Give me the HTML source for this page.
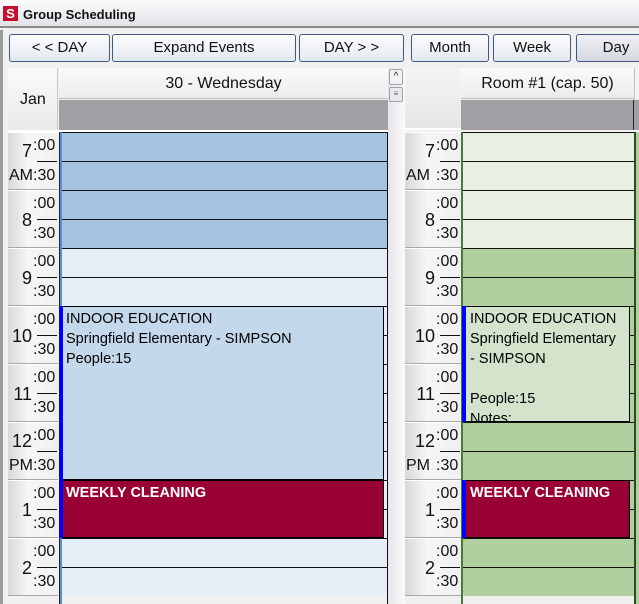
<!DOCTYPE html>
<html style="width:639px;height:604px;overflow:hidden"><head><meta charset="utf-8"><style>
*{margin:0;padding:0;box-sizing:border-box}
body{width:639px;height:604px;overflow:hidden;background:#f0f0f0;font-family:"Liberation Sans",sans-serif;position:relative}
#w{position:absolute;left:0;top:0;width:639px;height:604px;overflow:hidden}
.a{position:absolute}
.btn{position:absolute;top:34px;height:28px;border:1px solid #3c5a80;border-radius:3px;background:linear-gradient(#fdfdfe,#e4e8ef);font-size:15px;color:#111;text-align:center;line-height:26px}
.hr{position:absolute;background:linear-gradient(90deg,#d8d8d8,#f6f6f6 40%,#f0f0f0);border-top:1px solid #fff;border-bottom:1px solid #a8a8a8}
.t{position:absolute;font-size:16px;color:#111}
.n{position:absolute;font-size:18px;color:#111}
.ev{position:absolute;font-size:14.5px;line-height:20px;padding-left:4px;padding-top:2px;overflow:hidden;border:1px solid #000}
</style></head><body><div id="w">
<div class="a" style="left:0;top:0;width:639px;height:28px;background:linear-gradient(#fbfbfc,#e2e3e8);border-bottom:2px solid #8a8a8a"></div>
<div class="a" style="left:3px;top:6px;width:15px;height:15px;background:#c8102e;color:#fff;font:bold 13px 'Liberation Sans',sans-serif;text-align:center;line-height:15px">S</div>
<div class="a" style="left:23px;top:7px;font:bold 13px 'Liberation Sans',sans-serif;color:#111">Group Scheduling</div>
<div class="a" style="left:0;top:30px;width:3px;height:574px;background:#9a9a9a"></div>
<div class="btn" style="left:9px;width:101px">&lt; &lt; DAY</div>
<div class="btn" style="left:112px;width:184px">Expand Events</div>
<div class="btn" style="left:299px;width:105px">DAY &gt; &gt;</div>
<div class="btn" style="left:411px;width:78px">Month</div>
<div class="btn" style="left:493px;width:78px">Week</div>
<div class="btn" style="left:576px;width:80px;background:linear-gradient(#f0f2f6,#d4d8e0)">Day</div>
<div class="a" style="left:8px;top:68px;width:50px;height:62px;background:linear-gradient(#fafafa,#eaeaea);border-right:1px solid #c8c8c8"></div>
<div class="t" style="left:20px;top:91px">Jan</div>
<div class="a" style="left:59px;top:68px;width:329px;height:31px;background:linear-gradient(#fafafa,#ececec);border-bottom:1px solid #c0c0c0"></div>
<div class="t" style="left:59px;width:329px;text-align:center;top:75px">30 - Wednesday</div>
<div class="a" style="left:59px;top:100px;width:329px;height:30px;background:#a0a0a4"></div>
<div class="a" style="left:388px;top:68px;width:17px;height:536px;background:linear-gradient(90deg,#e6e6ea,#fafafa)"></div>
<div class="a" style="left:389px;top:69px;width:14px;height:16px;border:1px solid #a0a0a8;border-radius:2px;background:#f2f2f4;font-size:10px;text-align:center;line-height:14px;color:#222">^</div>
<div class="a" style="left:389px;top:87px;width:14px;height:15px;border:1px solid #a0a0a8;border-radius:2px;background:#eaeaee;font-size:8px;text-align:center;line-height:12px;color:#666">≡</div>
<div class="a" style="left:405px;top:68px;width:56px;height:62px;background:linear-gradient(#f4f4f4,#e6e6e6);border-bottom:2px solid #fff"></div>
<div class="a" style="left:461px;top:68px;width:173px;height:31px;background:linear-gradient(#fafafa,#ececec);border-bottom:1px solid #c0c0c0"></div>
<div class="t" style="left:461px;width:173px;text-align:center;top:75px">Room #1 (cap. 50)</div>
<div class="a" style="left:634px;top:68px;width:1px;height:32px;background:#c0c0c0"></div>
<div class="a" style="left:635px;top:68px;width:4px;height:31px;background:#f4f4f4"></div>
<div class="a" style="left:461px;top:100px;width:178px;height:30px;background:#a0a0a4"></div>
<div class="a" style="left:633px;top:100px;width:1px;height:30px;background:#222"></div>
<div class="a" style="left:8px;top:130px;width:380px;height:2px;background:#fff"></div>
<div id="g"></div>
<div class="ev" style="left:62px;top:306px;width:322px;height:174px;background:#c4d8ec;border-left:none">INDOOR EDUCATION<br>Springfield Elementary - SIMPSON<br>People:15</div>
<div class="ev" style="left:62px;top:480px;width:322px;height:58px;background:#990033;color:#fff;border-left:none;font-weight:bold">WEEKLY CLEANING</div>
<div class="ev" style="left:466px;top:306px;width:164px;height:116px;background:#d4e4cc;border-left:none">INDOOR EDUCATION<br>Springfield Elementary<br>- SIMPSON<br><br>People:15<br>Notes:</div>
<div class="ev" style="left:466px;top:480px;width:164px;height:58px;background:#990033;color:#fff;border-left:none;font-weight:bold">WEEKLY CLEANING</div>
<div class="a" style="left:59px;top:306px;width:4px;height:232px;background:#0000ff"></div>
<div class="a" style="left:462px;top:306px;width:4px;height:116px;background:#0000ff"></div>
<div class="a" style="left:462px;top:480px;width:4px;height:58px;background:#0000ff"></div>
</div>
<script>
var h='';var hrs=['7','8','9','10','11','12','1','2','3'];
for(var k=0;k<16;k++){var y=132+29*k;var hh=Math.min(29,604-y);
var b1=k<4?'#a6c2e2':'#e6eef8',b2=k<4?'#e8f0e4':'#b0d0a0';
h+='<div class="a" style="left:62px;top:'+y+'px;width:326px;height:'+hh+'px;background:'+b1+';border-top:1px solid #111"></div>';
h+='<div class="a" style="left:463px;top:'+y+'px;width:171px;height:'+hh+'px;background:'+b2+';border-top:1px solid #111"></div>';}
h+='<div class="a" style="left:59px;top:132px;width:3px;height:472px;background:#5a8ed0;border-left:1px solid #222"></div>';
h+='<div class="a" style="left:461px;top:132px;width:2px;height:472px;background:#4a7a3a"></div>';
h+='<div class="a" style="left:634px;top:132px;width:3px;height:472px;background:#2a4a20"></div>';
h+='<div class="a" style="left:636px;top:132px;width:3px;height:472px;background:#b0d0a0"></div>';
h+='<div class="a" style="left:387px;top:132px;width:1px;height:472px;background:#111"></div>';
for(var i=0;i<8;i++){var y=132+58*i;
[[8,58],[405,461]].forEach(function(c){var x=c[0],w=c[1]-c[0];
h+='<div class="hr" style="left:'+x+'px;top:'+y+'px;width:'+w+'px;height:58px"></div>';
h+='<div class="t" style="left:'+(x+w-25)+'px;top:'+(y+5)+'px">:00</div>';
h+='<div class="t" style="left:'+(x+w-25)+'px;top:'+(y+35)+'px">:30</div>';
h+='<div class="a" style="left:'+(x+w-21)+'px;top:'+(y+29)+'px;width:20px;height:1px;background:#111"></div>';
var lab=hrs[i];
if(i==0||i==5){h+='<div class="n" style="left:'+(x+w-46)+'px;top:'+(y+9)+'px;width:20px;text-align:right">'+lab+'</div>';
h+='<div class="t" style="left:'+(x+1)+'px;top:'+(y+35)+'px">'+(i==0?'AM':'PM')+'</div>';}
else h+='<div class="n" style="left:'+(x+w-50)+'px;top:'+(y+20)+'px;width:24px;text-align:right">'+lab+'</div>';
});}
document.getElementById('g').innerHTML=h;
</script>
</body></html>
